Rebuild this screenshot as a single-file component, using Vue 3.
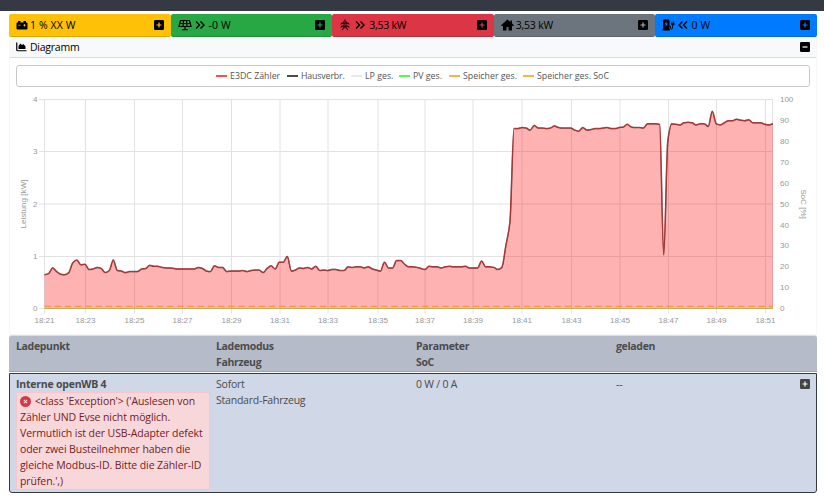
<template>
  <div class="page">
    <div class="navbar"></div>
    <main class="content">
      <!-- 顶部数值卡片 -->
      <div class="tiles">
        <div v-for="t in tiles" :key="t.name" class="tile" :class="t.name">
          <svg v-if="t.name === 'battery'" class="icon" width="12" height="12" viewBox="0 0 24 24">
            <path d="M4 4h5v3h6V4h5v3h1a2 2 0 0 1 2 2v10a2 2 0 0 1-2 2H3a2 2 0 0 1-2-2V9a2 2 0 0 1 2-2h1z" />
            <path class="cut" d="M4.5 12.5h4.5M14.5 12.5h5M17 10v5" />
          </svg>
          <svg v-else-if="t.name === 'pv'" class="icon" width="14" height="12" viewBox="0 0 28 24">
            <path class="line" d="M5 3h18l3 12H2zM3.5 9h21M11 3l-1 12M17 3l1 12M14 15v6M8 21.5h12" />
          </svg>
          <svg v-else-if="t.name === 'grid'" class="icon tower" width="10" height="12" viewBox="0 0 20 24">
            <path class="thin" d="M8 7V4l2-3 2 3v3M2 9l6-3h4l6 3zM2 9v3M18 9v3M2 15l6-3h4l6 3zM2 15v3M18 15v3M8 6v9l-4 8M12 6v9l4 8M8 15l7 6M12 15l-7 6" />
          </svg>
          <svg v-else-if="t.name === 'house'" class="icon" width="13" height="12" viewBox="0 0 26 24">
            <path d="M13 1L0 12.5 2 14.5l2-1.7V23h7v-7h4v7h7V12.8l2 1.7 2-2-4-3.6V3h-3v3.2z" />
          </svg>
          <svg v-else class="icon" width="13" height="12" viewBox="0 0 26 24">
            <path d="M2 3a2 2 0 0 1 2-2h9a2 2 0 0 1 2 2v17h1v3H1v-3h1z" />
            <path class="bolt" d="M9.5 4L5 11h3l-1 5 5-7H9z" />
            <path class="hose" d="M15 14h2v4c0 3 4 3 4 0v-6" />
            <path d="M18 8h7v2c0 2-1.5 3.5-3.5 3.5S18 12 18 10zM19 5h1.6v3H19zM22.6 5h1.6v3h-1.6z" />
          </svg>
          <svg v-if="t.dir" class="arrows" :class="t.dir" width="10" height="10" viewBox="0 0 20 20">
            <path class="chevron" d="M2 3l7 7-7 7M11 3l7 7-7 7" />
          </svg>
          <span class="value">{{ t.value }}</span>
          <svg class="toggle" width="10" height="10" viewBox="0 0 10 10">
            <rect width="10" height="10" rx="1.2" />
            <path class="sign" d="M2.5 5h5M5 2.5v5" />
          </svg>
        </div>
      </div>

      <!-- 图表 -->
      <section class="card">
        <header class="card-header">
          <svg width="11" height="10" viewBox="0 0 22 20">
            <path class="line" d="M1.5 1v14.5q0 2 2 2H21" />
            <path d="M5 14V8l4-5 3 3 3-2 4 5v5z" />
          </svg>
          <span>Diagramm</span>
          <svg class="toggle" width="10" height="10" viewBox="0 0 10 10">
            <rect width="10" height="10" rx="1.2" />
            <path class="sign" d="M2.5 5h5" />
          </svg>
        </header>
        <div class="legend">
          <span v-for="l in legend" :key="l.text" class="legend-item" :class="l.color" :style="{ width: l.width + 'px' }">
            <i></i>{{ l.text }}
          </span>
        </div>
        <svg class="chart" width="806" height="247" viewBox="10 87 806 247">
          <g class="grid-lines">
            <path v-for="y in [99.5, 151.5, 204, 256.5, 308.5]" :key="'y' + y" :d="`M39 ${y}H773`" />
            <path v-for="x in gridX" :key="'x' + x" :d="`M${x} 99V313.5`" />
            <path d="M772.5 99V308" />
          </g>
          <path class="area" :d="linePath + 'V308.3H44.5Z'" />
          <path class="house-line" :d="linePath" />
          <path class="meter-line" :d="linePath" />
          <path class="pv-line" d="M44.5 308.5H773" />
          <path class="soc-line" d="M44.5 306.4H773" />
          <g class="ticks">
            <text v-for="n in 5" :key="'l' + n" x="37.5" :y="363.2 - n * 52.2" text-anchor="end">{{ n - 1 }}</text>
            <text v-for="n in 11" :key="'r' + n" x="780" :y="332 - n * 20.9">{{ (n - 1) * 10 }}</text>
            <text v-for="(x, i) in gridX" :key="'t' + i" :x="x" y="323" text-anchor="middle">18:{{ 21 + i * 2 }}</text>
            <text class="axis" transform="translate(26.3 204) rotate(-90)" text-anchor="middle">Leistung [kW]</text>
            <text class="axis" transform="translate(800.5 204) rotate(90)" text-anchor="middle">SoC [%]</text>
          </g>
        </svg>
      </section>

      <!-- 充电点列表 -->
      <section class="points">
        <div class="row head">
          <div>Ladepunkt</div>
          <div>Lademodus<br />Fahrzeug</div>
          <div>Parameter<br />SoC</div>
          <div>geladen</div>
        </div>
        <div class="row point">
          <div>
            <b>Interne openWB 4</b>
            <div class="alert">
              <svg width="11" height="11" viewBox="0 0 11 11">
                <circle cx="5.5" cy="5.5" r="5.5" />
                <path d="M3.9 3.9l3.2 3.2M7.1 3.9L3.9 7.1" />
              </svg>
              &lt;class 'Exception'&gt; ('Auslesen von<br />
              Zähler UND Evse nicht möglich.<br />
              Vermutlich ist der USB-Adapter defekt<br />
              oder zwei Busteilnehmer haben die<br />
              gleiche Modbus-ID. Bitte die Zähler-ID<br />
              prüfen.',)
            </div>
          </div>
          <div>Sofort<br />Standard-Fahrzeug</div>
          <div>0 W / 0 A</div>
          <div class="last">
            <span>--</span>
            <svg class="toggle" width="10" height="10" viewBox="0 0 10 10">
              <rect width="10" height="10" rx="1.2" />
              <path class="sign" d="M2.5 5h5M5 2.5v5" />
            </svg>
          </div>
        </div>
      </section>
    </main>
  </div>
</template>

<script setup>
import { computed } from 'vue'

const tiles = [
  { name: 'battery', value: '1 % XX W' },
  { name: 'pv', dir: 'right', value: '-0 W' },
  { name: 'grid', dir: 'right', value: '3,53 kW' },
  { name: 'house', value: '3,53 kW' },
  { name: 'charge', dir: 'left', value: '0 W' },
]

const legend = [
  { text: 'E3DC Zähler', color: 'red', width: 71 },
  { text: 'Hausverbr.', color: 'dark', width: 64 },
  { text: 'LP ges.', color: 'light', width: 48 },
  { text: 'PV ges.', color: 'green', width: 50 },
  { text: 'Speicher ges.', color: 'orange', width: 74 },
  { text: 'Speicher ges. SoC', color: 'orange', width: 88 },
]

const gridX = [44.5, 85.5, 134.5, 182.5, 231.5, 280, 328, 378, 425, 473, 522, 571.5, 620, 668.5, 716.5, 765.5]

// 每 10 秒一个功率值 (kW)
const power = [
  0.64, 0.66, 0.77, 0.7, 0.65, 0.64, 0.68, 0.87, 0.92, 0.83, 0.84, 0.74, 0.75, 0.78, 0.76, 0.68, 0.72, 0.92, 0.72, 0.71,
  0.68, 0.7, 0.7, 0.7, 0.75, 0.76, 0.82, 0.8, 0.8, 0.78, 0.77, 0.77, 0.76, 0.75, 0.75, 0.75, 0.75, 0.75, 0.78, 0.76,
  0.71, 0.7, 0.81, 0.78, 0.78, 0.7, 0.71, 0.71, 0.71, 0.72, 0.7, 0.72, 0.73, 0.73, 0.68, 0.76, 0.81, 0.75, 0.88, 0.88,
  0.99, 0.71, 0.73, 0.77, 0.76, 0.78, 0.75, 0.8, 0.72, 0.73, 0.72, 0.74, 0.74, 0.72, 0.72, 0.79, 0.78, 0.79, 0.79, 0.77,
  0.79, 0.75, 0.73, 0.71, 0.88, 0.77, 0.77, 0.91, 0.91, 0.84, 0.79, 0.79, 0.78, 0.76, 0.74, 0.8, 0.79, 0.79, 0.77, 0.79,
  0.8, 0.79, 0.79, 0.79, 0.8, 0.77, 0.77, 0.77, 0.9, 0.79, 0.79, 0.78, 0.74, 0.78, 1.2, 1.65, 3.44, 3.44, 3.46, 3.45,
  3.41, 3.5, 3.45, 3.45, 3.44, 3.45, 3.49, 3.46, 3.45, 3.45, 3.45, 3.41, 3.39, 3.46, 3.41, 3.42, 3.44, 3.44, 3.45, 3.46,
  3.44, 3.44, 3.46, 3.47, 3.52, 3.47, 3.46, 3.46, 3.45, 3.53, 3.53, 3.53, 3.52, 1.02, 3.2, 3.53, 3.52, 3.51, 3.55, 3.56,
  3.55, 3.51, 3.53, 3.53, 3.48, 3.77, 3.53, 3.51, 3.55, 3.59, 3.59, 3.62, 3.6, 3.59, 3.61, 3.55, 3.55, 3.55, 3.52, 3.51,
  3.53,
]

const linePath = computed(() => {
  const step = 728.5 / (power.length - 1)
  const y = power.map((v) => 308.1 - v * 52.2)
  // 局部极值处保持水平切线，避免曲线过冲
  const slope = y.map((v, i) => {
    const a = v - y[i - 1]
    const b = y[i + 1] - v
    return a * b > 0 ? (2 * a * b) / (a + b) / 3 : 0
  })
  let d = `M44.5 ${y[0].toFixed(2)}`
  for (let i = 1; i < y.length; i++) {
    const x = 44.5 + i * step
    d += `C${(x - (step * 2) / 3).toFixed(2)} ${(y[i - 1] + slope[i - 1]).toFixed(2)} ${(x - step / 3).toFixed(2)} ${(y[i] - slope[i]).toFixed(2)} ${x.toFixed(2)} ${y[i].toFixed(2)}`
  }
  return d
})
</script>

<style>
body {
  margin: 0;
  background: #fff;
}
</style>

<style scoped>
* {
  box-sizing: border-box;
}
.page {
  height: 498px;
  overflow: hidden;
  font: 10.5px/16px 'Open Sans', 'Noto Sans', sans-serif;
  letter-spacing: -0.22px;
  color: #000;
}
svg {
  display: block;
  flex-shrink: 0;
}
.navbar {
  height: 11px;
  background: #353943;
}
.content {
  width: 808px;
  margin: 3px 0 0 9px;
}
.tiles {
  display: grid;
  grid-template-columns: repeat(5, 1fr);
}
.tile {
  display: flex;
  align-items: center;
  height: 23px;
  padding: 0 7px;
  border-radius: 2px;
  border-bottom: 1px solid rgba(0, 0, 0, 0.14);
}
.battery {
  background: #ffc107;
  letter-spacing: 0.1px;
}
.pv {
  background: #28a745;
  letter-spacing: 0.1px;
}
.grid {
  background: #dc3545;
}
.house {
  background: #6c757d;
}
.charge {
  background: #007bff;
  letter-spacing: 0.2px;
}
.tower {
  margin: 0 2px 0 1px;
}
.value {
  margin-left: 2px;
}
.arrows {
  margin: 0 2px 0 3px;
}
.arrows.left {
  margin-right: 1px;
  transform: scaleX(-1);
}
.toggle {
  margin-left: auto;
}
.line,
.thin,
.hose,
.chevron {
  fill: none;
  stroke: #000;
  stroke-width: 2.4;
}
.chevron {
  stroke-width: 2.8;
}
.thin {
  stroke-width: 1.2;
}
.hose {
  stroke-width: 1.6;
}
.cut {
  fill: none;
  stroke: #ffc107;
  stroke-width: 1.6;
}
.bolt {
  fill: #007bff;
}
.sign {
  stroke: #fff;
  stroke-width: 1.2;
}
.battery .sign {
  stroke: #ffc107;
}
.pv .sign {
  stroke: #28a745;
}
.grid .sign {
  stroke: #dc3545;
}
.house .sign {
  stroke: #a5abb0;
}
.charge .sign {
  stroke: #007bff;
}
.card {
  height: 298px;
  border: 1px solid #f7f7f7;
  border-top: 0;
  border-radius: 2px;
}
.card-header {
  display: flex;
  align-items: center;
  height: 21px;
  padding: 0 6px;
  background: #f7f9fb;
  border-bottom: 1px solid #d9dcdf;
}
.card-header span {
  margin-left: 3px;
  letter-spacing: -0.25px;
}
.legend {
  display: flex;
  height: 22px;
  margin: 7px 6px 0;
  padding: 0 0 0 199px;
  border: 1px solid #c8c8c8;
  border-radius: 3px;
  font-size: 8.8px;
  line-height: 20px;
  letter-spacing: 0;
  color: #555;
}
.legend-item {
  display: flex;
  align-items: center;
  flex-shrink: 0;
  white-space: nowrap;
}
.legend-item i {
  width: 11px;
  height: 2px;
  margin-right: 3px;
  background: currentColor;
}
.red i {
  background: #ff4d4d;
}
.dark i {
  background: #4d4d4d;
}
.dark {
  letter-spacing: -0.15px;
}
.light i {
  background: #e8e8e8;
}
.green i {
  background: #4dff4d;
}
.orange i {
  background: #ffb04d;
}
.grid-lines {
  fill: none;
  stroke: #e2e2e2;
}
.area {
  fill: rgba(255, 0, 0, 0.3);
}
.house-line,
.meter-line,
.pv-line,
.soc-line {
  fill: none;
}
.house-line {
  stroke: rgba(0, 0, 0, 0.6);
  stroke-width: 1.5;
}
.meter-line {
  stroke: rgba(225, 30, 30, 0.6);
  stroke-width: 1.2;
}
.pv-line {
  stroke: #b3b35f;
}
.soc-line {
  stroke: #ff9340;
  stroke-width: 1.3;
  stroke-dasharray: 6.5 3.7;
}
.ticks {
  font-family: 'Liberation Sans', Arial, sans-serif;
  font-size: 8.1px;
  letter-spacing: -0.1px;
  fill: #999;
}
.axis {
  letter-spacing: 0;
}
.points {
  color: #4b4b4b;
}
.row {
  display: grid;
  grid-template-columns: 200px 200px 200px 1fr;
  padding-left: 7px;
}
.head {
  height: 37px;
  padding-top: 2px;
  border-top: 1px solid #dcdee2;
  border-bottom: 1px solid #9ea3b0;
  border-radius: 3px 3px 0 0;
  background: #b6bbc9;
  font-weight: 700;
  letter-spacing: -0.33px;
}
.point {
  height: 120px;
  margin-top: 1px;
  padding: 2px 6px 0 6px;
  border: 1px solid #343a40;
  border-radius: 0 0 3px 3px;
  background: #d0d7e6;
}
.point b {
  letter-spacing: -0.22px;
}
.alert {
  width: 194px;
  height: 98px;
  padding: 0 3px;
  border: 1px solid #f5c6cb;
  border-radius: 2px;
  background: #f8d7da;
  color: #721c24;
  letter-spacing: -0.09px;
  white-space: nowrap;
}
.alert svg {
  display: inline-block;
  margin-right: 1px;
  vertical-align: -2px;
}
.alert circle {
  fill: #dc3545;
}
.alert path {
  stroke: #f8d7da;
  stroke-width: 1.2;
}
.last {
  display: flex;
}
.last .toggle {
  margin-top: 3px;
}
.last rect {
  fill: #454545;
}
</style>
